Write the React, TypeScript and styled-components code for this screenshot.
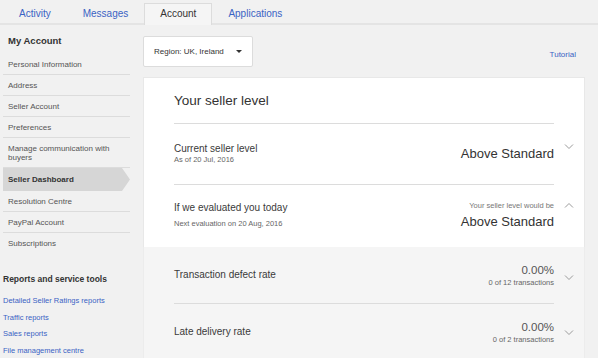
import React from "react";
import styled, { createGlobalStyle } from "styled-components";

const GlobalStyle = createGlobalStyle`
	html, body {
		margin: 0;
		padding: 0;
		background: #f1f1f1;
		font-family: "Liberation Sans", Arial, sans-serif;
		color: #333;
	}
	body {
		width: 598px;
		height: 358px;
		overflow: hidden;
	}
`;

const tabs = ["Activity", "Messages", "Account", "Applications"];

const menu = [
	"Personal Information",
	"Address",
	"Seller Account",
	"Preferences",
	"Manage communication with buyers",
	"Seller Dashboard",
	"Resolution Centre",
	"PayPal Account",
	"Subscriptions",
];

const reports = [
	"Detailed Seller Ratings reports",
	"Traffic reports",
	"Sales reports",
	"File management centre",
];

const Chevron = ({ up }: { up?: boolean }) => (
	<svg width="10" height="6" viewBox="0 0 10 6">
		<path
			d={up ? "M1 5.5 L5 1.5 L9 5.5" : "M1 0.5 L5 4.5 L9 0.5"}
			fill="none"
			stroke="#9a9a9a"
			strokeWidth="1"
		/>
	</svg>
);

const App = () => {
	return (
		<>
			<GlobalStyle />
			<Page>
				<TabBar>
					{tabs.map((t) => (
						<Tab key={t} active={t === "Account"}>{t}</Tab>
					))}
				</TabBar>
				<Body>
					<Sidebar>
						<SideHeading>My Account</SideHeading>
						<MenuList>
							{menu.map((m, i) => (
								<MenuItem
									key={m}
									active={m === "Seller Dashboard"}
									last={i === menu.length - 1}
								>
									{m}
								</MenuItem>
							))}
						</MenuList>
						<ReportsHeading>Reports and service tools</ReportsHeading>
						{reports.map((r) => (
							<ReportLink key={r}>{r}</ReportLink>
						))}
					</Sidebar>
					<Main>
						<TopRow>
							<RegionSelect>
								Region: UK, Ireland
								<Caret />
							</RegionSelect>
							<Tutorial>Tutorial</Tutorial>
						</TopRow>
						<Card>
							<TitleRow>
								<Title>Your seller level</Title>
							</TitleRow>
							<Row>
								<RowBody height={60} divider>
									<div>
										<Label>Current seller level</Label>
										<Sub gap={0}>As of 20 Jul, 2016</Sub>
									</div>
									<Value>Above Standard</Value>
								</RowBody>
								<ChevronCell top={20}><Chevron /></ChevronCell>
							</Row>
							<Row>
								<RowBody height={61}>
									<div>
										<Label>If we evaluated you today</Label>
										<Sub gap={5}>Next evaluation on 20 Aug, 2016</Sub>
									</div>
									<RightBlock>
										<Hint>Your seller level would be</Hint>
										<Value>Above Standard</Value>
									</RightBlock>
								</RowBody>
								<ChevronCell top={17}><Chevron up /></ChevronCell>
							</Row>
							<Metrics>
								<Row>
									<RowBody height={56} divider>
										<Label>Transaction defect rate</Label>
										<RightBlock>
											<Percent>0.00%</Percent>
											<Sub gap={1}>0 of 12 transactions</Sub>
										</RightBlock>
									</RowBody>
									<ChevronCell top={28}><Chevron /></ChevronCell>
								</Row>
								<Row>
									<RowBody height={56}>
										<Label>Late delivery rate</Label>
										<RightBlock>
											<Percent>0.00%</Percent>
											<Sub gap={1}>0 of 2 transactions</Sub>
										</RightBlock>
									</RowBody>
									<ChevronCell top={26}><Chevron /></ChevronCell>
								</Row>
							</Metrics>
						</Card>
					</Main>
				</Body>
			</Page>
		</>
	);
};

export default App;

const Page = styled.div`
	width: 598px;
	height: 358px;
	overflow: hidden;
`;

const TabBar = styled.div`
	display: flex;
	padding: 3px 0 0 3px;
	height: 20px;
	border-bottom: 2px solid #e4e4e4;
`;

const Tab = styled.div<{ active?: boolean }>`
	padding: 0 15px;
	height: 22px;
	box-sizing: border-box;
	line-height: 20px;
	font-size: 10px;
	color: ${(p) => (p.active ? "#333" : "#3a63c4")};
	background: ${(p) => (p.active ? "#f5f5f5" : "transparent")};
	border: 1px solid ${(p) => (p.active ? "#dcdcdc" : "transparent")};
	border-bottom: none;
	margin-bottom: -2px;
`;

const Body = styled.div`
	display: flex;
`;

const Sidebar = styled.div`
	width: 127px;
	padding-left: 3px;
	flex-shrink: 0;
`;

const SideHeading = styled.div`
	font-size: 9.5px;
	font-weight: bold;
	line-height: 12px;
	padding: 10px 5px 7px;
	color: #333;
`;

const MenuList = styled.div`
	display: flex;
	flex-direction: column;
`;

const MenuItem = styled.div<{ active?: boolean; last?: boolean }>`
	font-size: 8px;
	line-height: 9px;
	padding: ${(p) => (p.active ? "7px 5px 6px" : "6px 5px 5px")};
	padding-right: 12px;
	color: ${(p) => (p.active ? "#333" : "#555")};
	font-weight: ${(p) => (p.active ? "bold" : "normal")};
	background: ${(p) => (p.active ? "#d6d6d6" : "transparent")};
	border-bottom: 1px solid ${(p) => (p.active || p.last ? "transparent" : "#dcdcdc")};
	clip-path: ${(p) =>
		p.active
			? "polygon(0 0, calc(100% - 8px) 0, 100% 50%, calc(100% - 8px) 100%, 0 100%)"
			: "none"};
`;

const ReportsHeading = styled.div`
	font-size: 8.5px;
	font-weight: bold;
	color: #333;
	margin: 20px 0 12px;
`;

const ReportLink = styled.div`
	font-size: 7.5px;
	line-height: 10px;
	color: #3a63c4;
	margin-bottom: 6.5px;
`;

const Main = styled.div`
	flex: 1;
	padding: 11px 13px 0 13px;
`;

const TopRow = styled.div`
	display: flex;
	justify-content: space-between;
	align-items: flex-end;
`;

const RegionSelect = styled.div`
	width: 110px;
	height: 31px;
	box-sizing: border-box;
	background: #fff;
	border: 1px solid #dcdcdc;
	border-radius: 2px;
	display: flex;
	align-items: center;
	padding-left: 10px;
	gap: 12px;
	font-size: 8px;
	color: #333;
`;

const Caret = styled.span`
	width: 0;
	height: 0;
	border-left: 3px solid transparent;
	border-right: 3px solid transparent;
	border-top: 3px solid #333;
`;

const Tutorial = styled.div`
	font-size: 8px;
	color: #3a63c4;
	margin: 0 9px 8px 0;
`;

const Card = styled.div`
	margin-top: 10px;
	background: #fff;
	border: 1px solid #e8e8e8;
	border-bottom: none;
	box-sizing: border-box;
`;

const TitleRow = styled.div`
	padding: 0 30px;
`;

const Title = styled.div`
	height: 45px;
	display: flex;
	align-items: center;
	font-size: 13.5px;
	color: #333;
	border-bottom: 1px solid #dcdcdc;
`;

const Row = styled.div`
	display: flex;
	padding-left: 30px;
`;

const RowBody = styled.div<{ height: number; divider?: boolean }>`
	flex: 1;
	height: ${(p) => p.height}px;
	display: flex;
	justify-content: space-between;
	align-items: center;
	border-bottom: 1px solid ${(p) => (p.divider ? "#dcdcdc" : "transparent")};
`;

const ChevronCell = styled.div<{ top: number }>`
	width: 30px;
	display: flex;
	justify-content: center;
	align-items: flex-start;
	padding-top: ${(p) => p.top}px;
	box-sizing: border-box;
`;

const Label = styled.div`
	font-size: 10px;
	line-height: 12px;
	color: #3a3a3a;
`;

const Sub = styled.div<{ gap: number }>`
	font-size: 7.5px;
	line-height: 10px;
	color: #666;
	margin-top: ${(p) => p.gap}px;
`;

const RightBlock = styled.div`
	display: flex;
	flex-direction: column;
	align-items: flex-end;
`;

const Hint = styled.div`
	font-size: 7.5px;
	line-height: 10px;
	color: #777;
	margin-bottom: 3px;
`;

const Value = styled.div`
	font-size: 13px;
	line-height: 16px;
	color: #333;
`;

const Percent = styled.div`
	font-size: 11.5px;
	line-height: 14px;
	color: #555;
`;

const Metrics = styled.div`
	background: #f5f5f5;
	margin: 0 -1px;
	border-left: 1px solid #ececec;
	border-right: 1px solid #ececec;
	height: 120px;
`;
